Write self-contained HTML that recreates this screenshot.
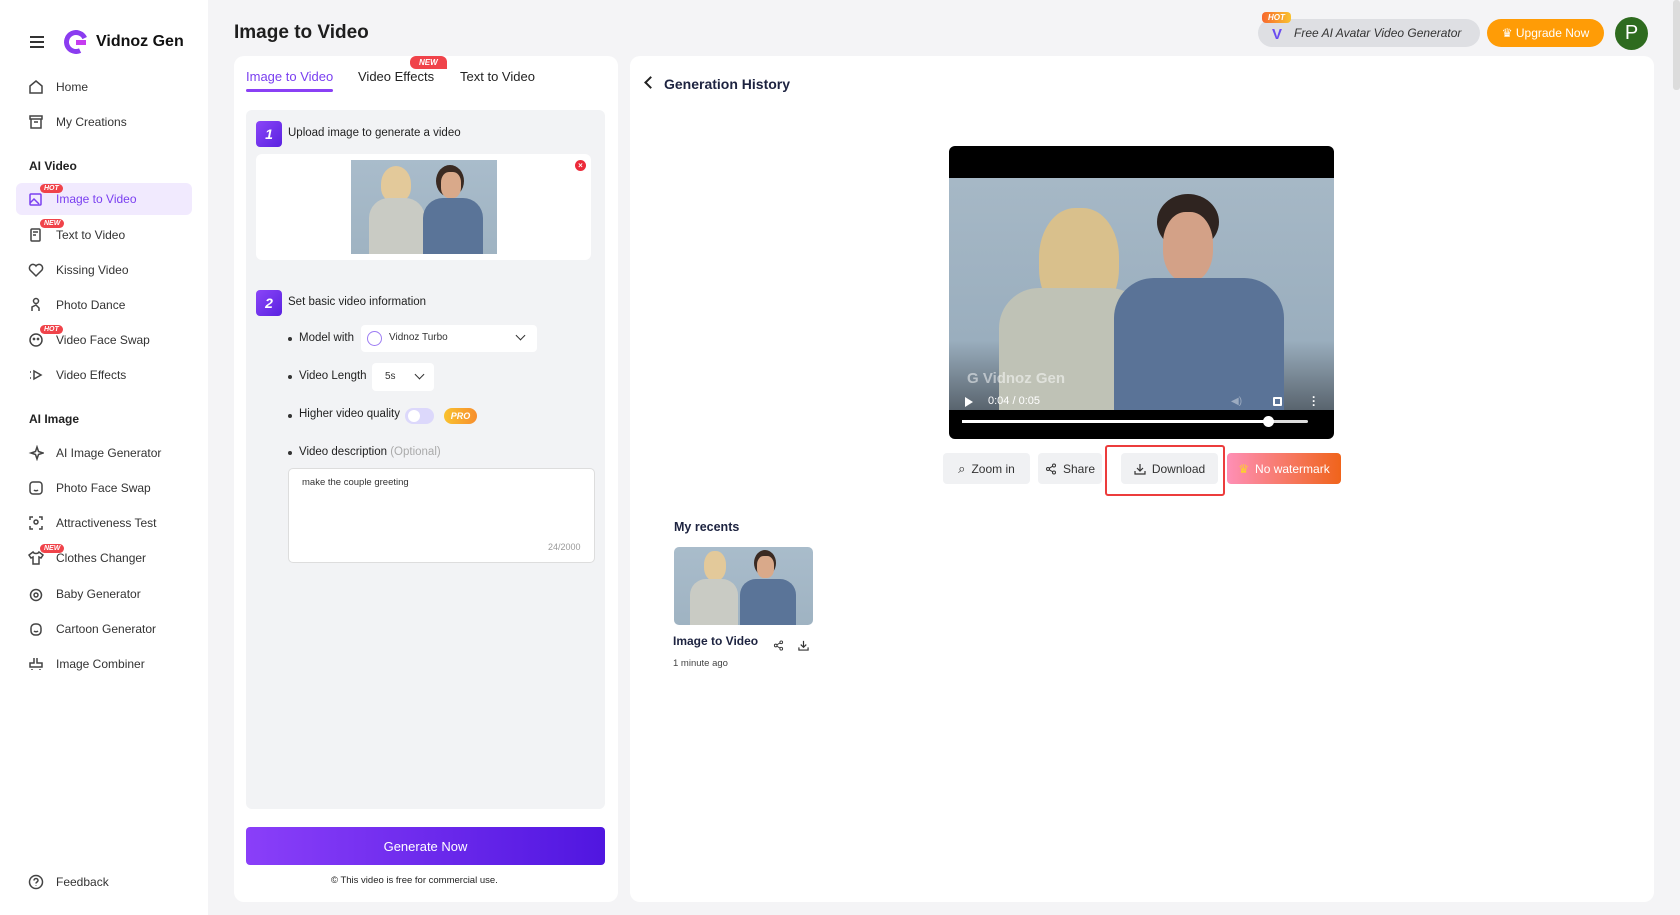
<!DOCTYPE html>
<html><head><meta charset="utf-8"><style>
*{box-sizing:border-box;margin:0;padding:0}
body{width:1680px;height:915px;overflow:hidden;background:#f4f4f6;font-family:"Liberation Sans",sans-serif;color:#222;position:relative}
.a{position:absolute}
.side{left:0;top:0;width:208px;height:915px;background:#fff}
.ni{position:absolute;left:28px;font-size:12px;color:#333;display:flex;align-items:center}
.ni svg{width:16px;height:16px;margin-right:12px;stroke:#444;fill:none;stroke-width:1.5}
.sec{position:absolute;left:29px;font-size:12px;font-weight:bold;color:#222}
.tag{position:absolute;left:40px;font-size:7px;font-weight:bold;color:#fff;background:#f0434a;border-radius:6px;padding:1px 4px;font-style:italic}
.card{background:#fff;border-radius:10px}
.photo{background:linear-gradient(180deg,#a9bccb,#9fb3c2);overflow:hidden}
.b{width:4px;height:4px;border-radius:50%;background:#333;position:absolute}
.lbl{font-size:11.5px;color:#222}
.btn{position:absolute;top:453px;height:31px;border-radius:4px;background:#f0f1f3;font-size:12px;color:#333;display:flex;align-items:center;justify-content:center;gap:6px}
</style></head><body>
<div class="a side">
 <div class="a" style="left:30px;top:36px;width:14px;height:12px;border-top:2px solid #333;border-bottom:2px solid #333"><div style="margin-top:3px;border-top:2px solid #333"></div></div>
 <div class="a" style="left:64px;top:30px;width:24px;height:24px;border-radius:50%;border:5px solid #8b3cf0;border-right-color:transparent;transform:rotate(20deg)"></div>
 <div class="a" style="left:76px;top:40px;width:10px;height:5px;background:#c63cf0"></div>
 <div class="a" style="left:96px;top:33px;font-size:16px;font-weight:bold;color:#111">Vidnoz Gen</div>
 <div class="ni" style="top:79px"><svg viewBox="0 0 16 16"><path d="M2 7L8 2l6 5v7H2z"/></svg>Home</div>
 <div class="ni" style="top:114px"><svg viewBox="0 0 16 16"><rect x="2" y="2" width="12" height="3"/><path d="M3 5v9h10V5M6 8h4"/></svg>My Creations</div>
 <div class="sec" style="top:159px">AI Video</div>
 <div class="a" style="left:16px;top:183px;width:176px;height:32px;background:#f1eafe;border-radius:6px"></div>
 <div class="ni" style="top:191px;color:#7a3ff0"><svg viewBox="0 0 16 16" style="stroke:#7a3ff0"><rect x="2" y="3" width="11" height="11" rx="1"/><path d="M2 12l4-4 5 5"/></svg>Image to Video</div>
 <div class="tag" style="top:184px">HOT</div>
 <div class="ni" style="top:227px"><svg viewBox="0 0 16 16"><rect x="3" y="2" width="9" height="12" rx="1"/><path d="M5 5h5M5 8h3"/></svg>Text to Video</div>
 <div class="tag" style="top:219px">NEW</div>
 <div class="ni" style="top:262px"><svg viewBox="0 0 16 16"><path d="M8 14L2 8a3 3 0 016-4 3 3 0 016 4z"/></svg>Kissing Video</div>
 <div class="ni" style="top:297px"><svg viewBox="0 0 16 16"><circle cx="8" cy="4" r="2.5"/><path d="M4 14v-4l4-2 3 3v3"/></svg>Photo Dance</div>
 <div class="ni" style="top:332px"><svg viewBox="0 0 16 16"><circle cx="8" cy="8" r="6"/><circle cx="6" cy="7" r=".6"/><circle cx="10" cy="7" r=".6"/></svg>Video Face Swap</div>
 <div class="tag" style="top:325px">HOT</div>
 <div class="ni" style="top:367px"><svg viewBox="0 0 16 16"><path d="M6 4l7 4-7 4zM2 5h1M2 11h1"/></svg>Video Effects</div>
 <div class="sec" style="top:412px">AI Image</div>
 <div class="ni" style="top:445px"><svg viewBox="0 0 16 16"><path d="M9 2l1.5 4.5L15 8l-4.5 1.5L9 14l-1.5-4.5L3 8l4.5-1.5z"/></svg>AI Image Generator</div>
 <div class="ni" style="top:480px"><svg viewBox="0 0 16 16"><rect x="2" y="2" width="12" height="12" rx="3"/><path d="M6 10c1 1 3 1 4 0"/></svg>Photo Face Swap</div>
 <div class="ni" style="top:515px"><svg viewBox="0 0 16 16"><path d="M2 5V2h3M11 2h3v3M14 11v3h-3M5 14H2v-3"/><circle cx="8" cy="7" r="2"/></svg>Attractiveness Test</div>
 <div class="ni" style="top:550px"><svg viewBox="0 0 16 16"><path d="M5 2L1 5l2 3 2-1v7h6V7l2 1 2-3-4-3c-1 2-5 2-6 0z"/></svg>Clothes Changer</div>
 <div class="tag" style="top:544px">NEW</div>
 <div class="ni" style="top:586px"><svg viewBox="0 0 16 16"><circle cx="8" cy="9" r="5.5"/><circle cx="8" cy="9" r="2"/></svg>Baby Generator</div>
 <div class="ni" style="top:621px"><svg viewBox="0 0 16 16"><rect x="3" y="3" width="10" height="11" rx="4"/><path d="M6 10c1 1 3 1 4 0"/></svg>Cartoon Generator</div>
 <div class="ni" style="top:656px"><svg viewBox="0 0 16 16"><path d="M6 2v5H2v4h12V7H9V2M4 13v1M12 13v1"/></svg>Image Combiner</div>
 <div class="ni" style="top:874px"><svg viewBox="0 0 16 16"><circle cx="8" cy="8" r="6.5"/><path d="M6 6.5a2 2 0 114 0c0 1.5-2 1.5-2 3M8 11.5v.5"/></svg>Feedback</div>
</div>

<div class="a" style="left:234px;top:22px;font-size:19px;font-weight:bold;color:#1e1e1e">Image to Video</div>

<div class="a" style="left:1258px;top:19px;width:222px;height:28px;background:#dedfe3;border-radius:14px"></div>
<div class="a" style="left:1262px;top:12px;font-size:8px;font-weight:bold;font-style:italic;color:#fff;background:linear-gradient(90deg,#f7682e,#f9c22f);padding:1px 6px;border-radius:4px">HOT</div>
<div class="a" style="left:1272px;top:26px;font-size:15px;font-weight:bold;color:#6a4cf0">V</div>
<div class="a" style="left:1294px;top:26px;font-size:12px;font-style:italic;color:#333">Free AI Avatar Video Generator</div>
<div class="a" style="left:1487px;top:19px;width:117px;height:28px;background:#ff9c06;border-radius:14px;color:#fff;font-size:12px;display:flex;align-items:center;justify-content:center">♛ Upgrade Now</div>
<div class="a" style="left:1615px;top:17px;width:33px;height:33px;border-radius:50%;background:#2e6b1f;color:#fff;font-size:20px;display:flex;align-items:center;justify-content:center">P</div>
<div class="a" style="left:1673px;top:0;width:7px;height:90px;background:#dcdcdc;border-radius:3px"></div>

<div class="a card" style="left:234px;top:56px;width:384px;height:846px"></div>
<div class="a" style="left:246px;top:69px;font-size:13px;color:#7a3ff0">Image to Video</div>
<div class="a" style="left:246px;top:89px;width:87px;height:3px;background:#8a40f5;border-radius:2px"></div>
<div class="a" style="left:358px;top:69px;font-size:13px;color:#222">Video Effects</div>
<div class="a" style="left:410px;top:56px;font-size:8px;font-weight:bold;font-style:italic;color:#fff;background:#f0434a;padding:2px 9px;border-radius:6px 6px 0 6px">NEW</div>
<div class="a" style="left:460px;top:69px;font-size:13px;color:#222">Text to Video</div>

<div class="a" style="left:246px;top:110px;width:359px;height:699px;background:#f2f3f5;border-radius:6px"></div>
<div class="a" style="left:256px;top:121px;width:26px;height:26px;border-radius:4px;background:linear-gradient(135deg,#8a45f8,#5a22e0);color:#fff;font-weight:bold;font-style:italic;font-size:14px;display:flex;align-items:center;justify-content:center">1</div>
<div class="a lbl" style="left:288px;top:127px">Upload image to generate a video</div>
<div class="a" style="left:256px;top:154px;width:335px;height:106px;background:#fff;border-radius:6px"></div>
<div class="a photo" style="left:351px;top:160px;width:146px;height:94px">
 <div class="a" style="left:30px;top:6px;width:30px;height:36px;border-radius:50% 50% 40% 40%;background:#e3c99a"></div>
 <div class="a" style="left:18px;top:38px;width:56px;height:60px;border-radius:20px 20px 0 0;background:#c9cbc4"></div>
 <div class="a" style="left:85px;top:5px;width:28px;height:32px;border-radius:50%;background:#3a2a22"></div>
 <div class="a" style="left:90px;top:12px;width:20px;height:26px;border-radius:40%;background:#d9a98a"></div>
 <div class="a" style="left:72px;top:38px;width:60px;height:60px;border-radius:20px 20px 0 0;background:#5a7498"></div>
</div>
<div class="a" style="left:575px;top:160px;width:11px;height:11px;border-radius:50%;background:#ec2a3a;color:#fff;font-size:8px;font-weight:bold;text-align:center;line-height:11px">×</div>

<div class="a" style="left:256px;top:290px;width:26px;height:26px;border-radius:4px;background:linear-gradient(135deg,#8a45f8,#5a22e0);color:#fff;font-weight:bold;font-style:italic;font-size:14px;display:flex;align-items:center;justify-content:center">2</div>
<div class="a lbl" style="left:288px;top:296px">Set basic video information</div>

<div class="b" style="left:288px;top:337px"></div><div class="a lbl" style="left:299px;top:332px">Model with</div>
<div class="a" style="left:361px;top:325px;width:176px;height:27px;background:#fff;border-radius:4px"></div>
<div class="a" style="left:367px;top:331px;width:15px;height:15px;border-radius:50%;border:1px solid #9d7cf3"></div>
<div class="a" style="left:389px;top:332px;font-size:10px;color:#333">Vidnoz Turbo</div>
<div class="a" style="left:517px;top:332px;width:7px;height:7px;border-right:1.6px solid #333;border-bottom:1.6px solid #333;transform:rotate(45deg)"></div>

<div class="b" style="left:288px;top:375px"></div><div class="a lbl" style="left:299px;top:370px">Video Length</div>
<div class="a" style="left:372px;top:363px;width:62px;height:28px;background:#fff;border-radius:4px"></div>
<div class="a" style="left:385px;top:371px;font-size:10px;color:#333">5s</div>
<div class="a" style="left:416px;top:371px;width:7px;height:7px;border-right:1.6px solid #333;border-bottom:1.6px solid #333;transform:rotate(45deg)"></div>

<div class="b" style="left:288px;top:414px"></div><div class="a lbl" style="left:299px;top:408px">Higher video quality</div>
<div class="a" style="left:405px;top:408px;width:29px;height:16px;border-radius:8px;background:#dcd8fb"></div>
<div class="a" style="left:408px;top:410px;width:12px;height:12px;border-radius:50%;background:#fff"></div>
<div class="a" style="left:444px;top:408px;width:33px;height:16px;border-radius:8px;background:linear-gradient(90deg,#f9c22f,#f78e2e);color:#fff;font-size:9px;font-weight:bold;font-style:italic;text-align:center;line-height:16px">PRO</div>

<div class="b" style="left:288px;top:451px"></div><div class="a lbl" style="left:299px;top:446px">Video description <span style="color:#aaa">(Optional)</span></div>
<div class="a" style="left:288px;top:468px;width:307px;height:95px;background:#fff;border:1px solid #ddd;border-radius:5px"></div>
<div class="a" style="left:302px;top:477px;font-size:9.5px;color:#333">make the couple greeting</div>
<div class="a" style="left:548px;top:542px;font-size:9px;color:#999">24/2000</div>

<div class="a" style="left:246px;top:827px;width:359px;height:38px;border-radius:4px;background:linear-gradient(90deg,#8a3ff9,#5016e0);color:#fff;font-size:13px;display:flex;align-items:center;justify-content:center">Generate Now</div>
<div class="a" style="left:331px;top:875px;font-size:9.5px;color:#222">© This video is free for commercial use.</div>

<div class="a card" style="left:630px;top:56px;width:1024px;height:846px"></div>
<div class="a" style="left:646px;top:78px;width:9px;height:9px;border-left:2.2px solid #222;border-bottom:2.2px solid #222;transform:rotate(45deg)"></div>
<div class="a" style="left:664px;top:76px;font-size:14px;font-weight:bold;color:#1d2340">Generation History</div>

<div class="a" style="left:949px;top:146px;width:385px;height:293px;background:#000;border-radius:6px;overflow:hidden">
 <div class="a photo" style="left:0;top:32px;width:385px;height:232px;background:linear-gradient(180deg,#a6b8c6,#9aaebe 70%,#59646e)">
  <div class="a" style="left:90px;top:30px;width:80px;height:110px;border-radius:45%;background:#d9c08c"></div>
  <div class="a" style="left:50px;top:110px;width:150px;height:130px;border-radius:40px 40px 0 0;background:#bfc2b6"></div>
  <div class="a" style="left:208px;top:16px;width:62px;height:56px;border-radius:50%;background:#2f2420"></div>
  <div class="a" style="left:214px;top:34px;width:50px;height:70px;border-radius:45%;background:#d3a187"></div>
  <div class="a" style="left:165px;top:100px;width:170px;height:140px;border-radius:40px 40px 0 0;background:#5a7397"></div>
  <div class="a" style="left:18px;top:192px;font-size:15px;font-weight:bold;color:rgba(255,255,255,.5)">G Vidnoz Gen</div>
 </div>
 <div class="a" style="left:16px;top:251px;width:0;height:0;border-left:8px solid #fff;border-top:5px solid transparent;border-bottom:5px solid transparent"></div>
 <div class="a" style="left:39px;top:249px;font-size:11px;color:#fff">0:04 / 0:05</div>
 <div class="a" style="left:282px;top:250px;font-size:10px;color:rgba(255,255,255,.4)">◀)</div>
 <div class="a" style="left:324px;top:251px;width:9px;height:9px;border:2px solid #fff;border-radius:1px"></div>
 <div class="a" style="left:363px;top:249px;color:#fff;font-size:12px;font-weight:bold;line-height:4px">·<br>·<br>·</div>
 <div class="a" style="left:13px;top:274px;width:346px;height:3px;background:#ddd;border-radius:2px"></div>
 <div class="a" style="left:13px;top:274px;width:305px;height:3px;background:#fff"></div>
 <div class="a" style="left:314px;top:270px;width:11px;height:11px;border-radius:50%;background:#fff"></div>
</div>

<div class="btn" style="left:943px;width:87px"><span style="font-size:13px">⌕</span>Zoom in</div>
<div class="btn" style="left:1038px;width:64px"><svg width="12" height="12" viewBox="0 0 12 12" fill="none" stroke="#333"><circle cx="9" cy="2.5" r="1.5"/><circle cx="3" cy="6" r="1.5"/><circle cx="9" cy="9.5" r="1.5"/><path d="M4.3 5.2l3.4-2M4.3 6.8l3.4 2"/></svg>Share</div>
<div class="btn" style="left:1121px;width:97px"><svg width="12" height="12" viewBox="0 0 12 12" fill="none" stroke="#333" stroke-width="1.2"><path d="M6 1v7M3 5l3 3 3-3M1 8v3h10V8"/></svg>Download</div>
<div class="a" style="left:1105px;top:445px;width:120px;height:51px;border:2.5px solid #ec3c3c;border-radius:3px"></div>
<div class="btn" style="left:1227px;width:114px;background:linear-gradient(90deg,#fe8fb6,#f0641b);color:#fff"><span style="color:#fcd22b">♛</span>No watermark</div>

<div class="a" style="left:674px;top:520px;font-size:12.5px;font-weight:bold;color:#1d2340">My recents</div>
<div class="a photo" style="left:674px;top:547px;width:139px;height:78px;border-radius:5px">
 <div class="a" style="left:30px;top:4px;width:22px;height:30px;border-radius:45%;background:#e3c99a"></div>
 <div class="a" style="left:16px;top:32px;width:48px;height:50px;border-radius:16px 16px 0 0;background:#c9cbc4"></div>
 <div class="a" style="left:80px;top:3px;width:22px;height:26px;border-radius:50%;background:#3a2a22"></div>
 <div class="a" style="left:83px;top:9px;width:17px;height:22px;border-radius:40%;background:#d9a98a"></div>
 <div class="a" style="left:66px;top:32px;width:56px;height:50px;border-radius:16px 16px 0 0;background:#5a7498"></div>
</div>
<div class="a" style="left:673px;top:634px;font-size:12px;font-weight:bold;color:#1d2340">Image to Video</div>
<div class="a" style="left:773px;top:638px"><svg width="11" height="11" viewBox="0 0 12 12" fill="none" stroke="#333"><circle cx="9" cy="2.5" r="1.5"/><circle cx="3" cy="6" r="1.5"/><circle cx="9" cy="9.5" r="1.5"/><path d="M4.3 5.2l3.4-2M4.3 6.8l3.4 2"/></svg></div>
<div class="a" style="left:798px;top:638px"><svg width="11" height="11" viewBox="0 0 12 12" fill="none" stroke="#333" stroke-width="1.3"><path d="M6 1v7M3 5l3 3 3-3M1 8v3h10V8"/></svg></div>
<div class="a" style="left:673px;top:658px;font-size:9.5px;color:#444">1 minute ago</div>
</body></html>
